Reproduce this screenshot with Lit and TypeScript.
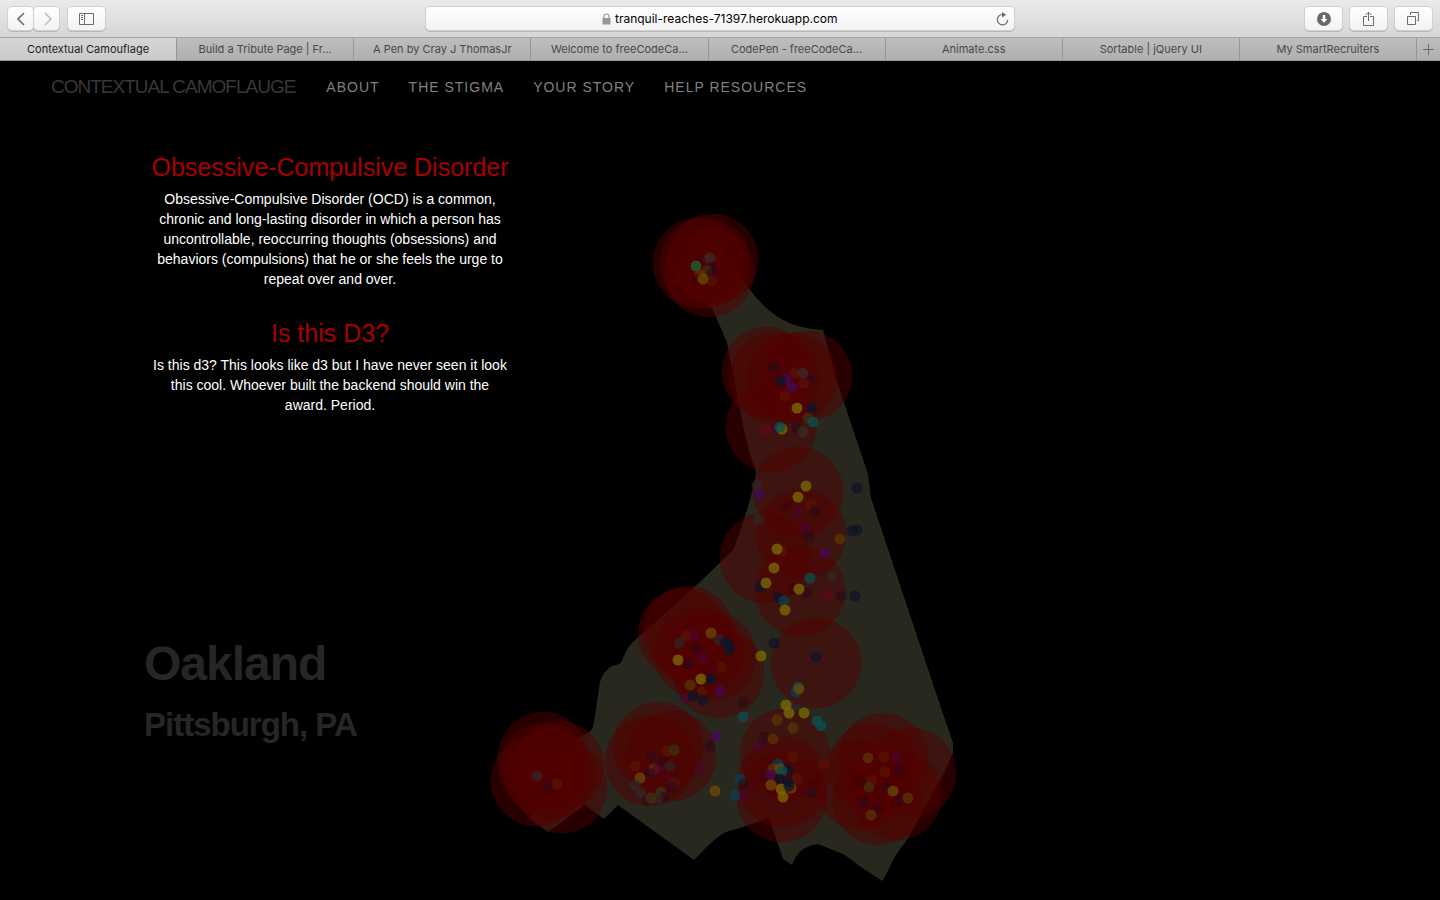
import { LitElement, html, svg, css } from "lit";
import { customElement } from "lit/decorators.js";

const TABS = [
  "Contextual Camouflage",
  "Build a Tribute Page | Fr...",
  "A Pen by Cray J ThomasJr",
  "Welcome to freeCodeCa...",
  "CodePen - freeCodeCa...",
  "Animate.css",
  "Sortable | jQuery UI",
  "My SmartRecruiters",
];

const LINKS = ["About", "The Stigma", "Your Story", "Help Resources"];

const LAND =
  "M707 228 L750 290 Q764 309 783 320 Q797 328 823 330 L837 382 L868 474 L871 498 L900 585 L935 690 " +
  "L953 743 L953 753 L943 775 L907 840 Q896 854 893 860 Q887 874 882 881 L858 865 Q850 858 843 854 L818 844 " +
  "Q810 845 803 849 Q795 856 792 865 L783 859 L769 818 L743 827 L726 832 Q718 835 700 854 L694 860 L618 805 " +
  "L604 819 L585 805 L548 832 L530 818 L560 750 L583 735 Q593 733 594 722 L600 682 Q602 675 606 671 Q611 665 616 665 " +
  "Q622 664 623 658 Q627 648 632 643 L700 582 L734 549 L748 507 L755 480 L756 471 L750 455 L744 430 L740 410 " +
  "L727 343 L723 333 L712 308 L700 299 L670 283 Z";

// Reports by neighbourhood: centre x, centre y
const AREAS: [number, number][] = [
  [698, 263], [713, 259], [709, 272], [705, 263],
  [767, 372], [775, 378], [807, 376], [792, 378], [771, 427],
  [798, 492], [801, 534], [765, 558], [800, 591], [816, 663],
  [683, 634], [688, 631], [699, 653], [711, 656], [719, 673],
  [658, 747], [671, 756], [650, 761],
  [543, 757], [536, 781], [559, 766], [562, 788], [544, 768], [550, 775],
  [785, 754], [782, 797], [783, 782],
  [883, 758], [911, 773], [878, 800], [861, 785], [873, 768], [897, 795],
];

const DOTS: [string, number, number][] = [
  ["rust", 707, 260], ["dark", 701, 261], ["slate", 710, 258], ["green", 696, 266], ["plum", 711, 267], ["olive", 707, 271],
  ["plum", 712, 273], ["amber", 700, 275], ["rust", 712, 281], ["dark", 698, 280], ["mustard", 703, 279],
  ["plum", 774, 367], ["rust", 795, 373], ["slate", 803, 373], ["plum", 812, 380], ["rust", 804, 383], ["purple", 786, 379],
  ["navy", 781, 381], ["purple", 792, 387], ["rust", 785, 396], ["yellow", 797, 408], ["navy", 812, 408], ["olive", 808, 418],
  ["teal", 813, 422], ["plum", 797, 428], ["slate", 803, 432], ["crimson", 766, 430], ["magenta", 776, 429], ["yellow", 782, 429],
  ["teal", 780, 427],
  ["grey", 757, 485], ["purple", 759, 494], ["yellow", 806, 486], ["yellow", 798, 497], ["rust", 811, 505], ["dark", 786, 506],
  ["plum", 815, 511], ["magenta", 798, 512], ["navy", 857, 488], ["navy", 852, 531], ["navy", 857, 530], ["amber", 840, 539],
  ["grey", 759, 519], ["wine", 780, 527], ["magenta", 805, 527], ["plum", 809, 536], ["purple", 825, 553], ["rust", 782, 551],
  ["yellow", 777, 549], ["yellow", 774, 568], ["magenta", 762, 582], ["navy", 760, 587], ["yellow", 766, 583], ["teal", 810, 578],
  ["grey", 832, 577], ["dark", 793, 589], ["plum", 807, 593], ["yellow", 799, 589], ["crimson", 828, 595], ["plum", 841, 596],
  ["navy", 855, 596], ["navy", 778, 597], ["blue", 784, 601], ["yellow", 785, 610],
  ["grey", 679, 643], ["magenta", 694, 635], ["rust", 686, 636], ["mustard", 711, 633], ["grey", 719, 640], ["navy", 725, 642],
  ["navy", 729, 645], ["navy", 729, 650], ["plum", 696, 648], ["magenta", 702, 658], ["yellow", 678, 660], ["plum", 688, 663],
  ["rust", 721, 667], ["wine", 714, 667], ["yellow", 701, 679], ["navy", 711, 679], ["amber", 690, 685], ["rust", 702, 692],
  ["purple", 720, 691], ["magenta", 686, 698], ["navy", 693, 696], ["navy", 703, 700], ["yellow", 761, 656], ["navy", 774, 643],
  ["navy", 816, 657], ["plum", 743, 702], ["crimson", 745, 719], ["teal", 743, 717], ["purple", 716, 736], ["plum", 710, 746],
  ["blue", 796, 692], ["teal", 798, 687], ["mustard", 799, 689], ["yellow", 786, 705], ["yellow", 789, 713], ["yellow", 804, 713],
  ["teal", 821, 726], ["teal", 817, 721], ["amber", 777, 720], ["amber", 793, 728], ["plum", 764, 737], ["amber", 773, 739],
  ["magenta", 759, 746],
  ["grey", 537, 776], ["plum", 547, 786], ["rust", 557, 784],
  ["rust", 667, 751], ["olive", 674, 750], ["plum", 651, 756], ["plum", 663, 761], ["rust", 635, 766], ["amber", 654, 769],
  ["grey", 670, 766], ["magenta", 658, 769], ["plum", 649, 773], ["mustard", 640, 778], ["magenta", 671, 781], ["rust", 674, 784],
  ["grey", 635, 785], ["plum", 673, 787], ["grey", 641, 793], ["olive", 661, 792], ["plum", 664, 797], ["grey", 658, 798],
  ["plum", 647, 800], ["olive", 651, 798], ["magenta", 700, 768], ["bright-amber", 715, 791], ["blue", 740, 779], ["blue", 735, 795],
  ["magenta", 745, 795], ["plum", 744, 784], ["rust", 824, 764], ["dark", 763, 776],
  ["rust", 793, 757], ["blue", 778, 764], ["amber", 773, 769], ["mustard", 780, 769], ["purple", 771, 775], ["navy", 788, 770],
  ["teal", 782, 771], ["navy", 780, 779], ["rust", 797, 779], ["bright-amber", 771, 785], ["bright-amber", 791, 788], ["navy", 788, 782],
  ["yellow", 781, 789], ["navy", 789, 786], ["yellow", 783, 797], ["plum", 811, 793], ["dark", 814, 783],
  ["amber", 868, 758], ["rust", 884, 757], ["magenta", 897, 758], ["plum", 899, 770], ["rust", 885, 772], ["rust", 872, 780],
  ["olive", 869, 787], ["plum", 887, 787], ["dark", 860, 782], ["mustard", 893, 791], ["plum", 899, 800], ["amber", 908, 798],
  ["plum", 864, 802], ["plum", 877, 809], ["amber", 871, 815], ["wine", 908, 810],
];

@customElement("app-root")
export class AppRoot extends LitElement {
  static styles = css`
    :host {
      display: flex;
      flex-direction: column;
      min-height: 100vh;
      background: #000;
      font-family: "Liberation Sans", Arial, sans-serif;
      font-size: 14px;
      line-height: 20px;
      color: #fff;
    }
    * { box-sizing: border-box; }
    button, input { font: inherit; color: inherit; border: 0; margin: 0; padding: 0; background: none; }
    .toolbar {
      display: grid;
      grid-template-columns: 1fr minmax(200px, 590px) 1fr;
      align-items: center;
      height: 38px;
      padding: 0 8px;
      background: linear-gradient(#eaeaea, #d6d6d6);
      border-bottom: 1px solid #a4a4a4;
      font-family: Inter, "Liberation Sans", sans-serif;
    }
    .group { display: flex; align-items: center; }
    .left { gap: 9px; }
    .right { gap: 8px; justify-content: flex-end; }
    .pair { display: flex; gap: 1px; }
    .tool, .address {
      height: 23px;
      border-radius: 4px;
      background: linear-gradient(#fefefe, #f3f3f3);
      box-shadow: 0 0 0 1px #d0d0d0, 0 1px 0 1px #b8b8b8;
    }
    .tool { display: grid; place-items: center; width: 37px; }
    .pair .tool { width: 25px; }
    .address { display: flex; align-items: center; margin: 0 1px; padding: 0 5px; color: #000; }
    .location { flex: 1; display: flex; align-items: center; justify-content: center; gap: 4px; padding-left: 16px; }
    .url { width: 226px; font-size: 12px; line-height: 20px; }
    .reload { display: grid; place-items: center; }
    .icon { display: block; fill: none; stroke: #6b6b6b; }
    .chevron { stroke-width: 1.6; }
    .faded { stroke: #bdbdbd; }
    .tabs {
      display: flex;
      height: 23px;
      background: linear-gradient(#bdbdbd, #b0b0b0);
      border-bottom: 1px solid #979797;
      font-family: Inter, "Liberation Sans", sans-serif;
      font-size: 11px;
      line-height: 20px;
      color: #484848;
    }
    .tab { flex: 1; min-width: 0; border-right: 1px solid #969696; white-space: nowrap; overflow: hidden; }
    .tab.active { background: linear-gradient(#d6d6d6, #cbcbcb); color: #1c1c1c; }
    .add { display: grid; place-items: center; width: 23px; }
    .navbar { display: flex; align-items: center; gap: 31px; height: 52px; padding: 0 51px; }
    .navbar a { text-decoration: none; }
    .brand { font-size: 19px; letter-spacing: -1px; color: #383838; }
    .menu { display: flex; gap: 29px; margin: 0; padding: 0; list-style: none; text-transform: uppercase; letter-spacing: 1px; }
    .menu a { color: #808080; }
    .stage { display: grid; flex: 1; }
    .copy, .map { grid-area: 1 / 1; }
    .copy { width: 372px; margin: 40px 0 0 10%; }
    .entry { margin-bottom: 30px; padding: 0 6px; text-align: center; }
    h2 { margin: 0 0 8px; font-size: 25px; font-weight: 400; line-height: 28px; color: #a80000; white-space: nowrap; }
    p { margin: 0; }
    .place { margin: 222px 0 0; color: #262626; }
    .city { margin: 0; font-size: 48px; line-height: 54px; letter-spacing: -1px; }
    .region { margin: 15px 0 0; font-size: 33px; line-height: 38px; letter-spacing: -1px; }
    .map { width: 470px; height: 675px; margin: 97px 0 0 calc(50% - 230px); }
    .land { fill: #28281f; }
    .area { fill: #520000; opacity: 0.5; }
    .dot { opacity: 0.75; }
    .yellow { fill: #7c6c04; }
    .mustard { fill: #6a4a06; }
    .bright-amber { fill: #704a06; }
    .amber { fill: #5e3206; }
    .rust { fill: #5c1604; opacity: 0.6; }
    .olive { fill: #3e3210; }
    .green { fill: #186a30; }
    .teal { fill: #0a5050; }
    .blue { fill: #0c3c50; }
    .navy { fill: #0e1428; }
    .purple { fill: #440856; }
    .magenta { fill: #4c0430; opacity: 0.6; }
    .crimson { fill: #640818; opacity: 0.6; }
    .wine { fill: #4c0410; opacity: 0.5; }
    .plum { fill: #2c0818; opacity: 0.6; }
    .dark { fill: #3c0408; opacity: 0.6; }
    .slate { fill: #3c2a2a; }
    .grey { fill: #30282a; opacity: 0.65; }
  `;

  render() {
    return html`
      <header>
        <div class="toolbar">
          <div class="group left">
            <div class="pair">
              <button class="tool" aria-label="Back">
                <svg class="icon chevron" width="24" height="22" viewBox="0 0 24 22"><path d="M15 5 9 11l6 6"/></svg>
              </button>
              <button class="tool" aria-label="Forward">
                <svg class="icon chevron faded" width="24" height="22" viewBox="0 0 24 22"><path d="M10 5 16 11 10 17"/></svg>
              </button>
            </div>
            <button class="tool" aria-label="Sidebar">
              <svg class="icon" width="16" height="12" viewBox="0 0 16 12"><path d="M.5.5h14v11H.5zM5.500.5v11M2 2.500h2M2 4.500h2M2 6.500h2"/></svg>
            </button>
          </div>
          <div class="address">
            <div class="location">
              <svg width="9" height="12" viewBox="0 0 9 12"><path d="M.5 5h8v6.500h-8z" fill="#979797"/><path d="M2 5.500V3.500a2.500 2.500 0 0 1 5 0v2" fill="none" stroke="#979797" stroke-width="1.200"/></svg>
              <input class="url" type="text" aria-label="Address" .value=${"tranquil-reaches-71397.herokuapp.com"} />
            </div>
            <button class="reload" aria-label="Reload">
              <svg class="icon" width="13" height="14" viewBox="0 0 13 14"><path d="M6.500 2.500a5.200 5.200 0 1 0 5.200 5.200" stroke-width="1.200"/><path d="M6 0 10 2.700 6 5.400z" fill="#6b6b6b" stroke="none"/></svg>
            </button>
          </div>
          <div class="group right">
            <button class="tool" aria-label="Downloads">
              <svg width="14" height="14" viewBox="0 0 14 14"><circle cx="7" cy="7" r="7" fill="#696969"/><path d="M5.800 3h2.400v4h2.200L7 10.800 3.600 7h2.200z" fill="#fff"/></svg>
            </button>
            <button class="tool" aria-label="Share">
              <svg class="icon" width="12" height="16" viewBox="0 0 12 16"><path d="M4 5.500H.5v9h10v-9H7M5.500 10V1.500M2.700 4 5.500 1.200 8.300 4"/></svg>
            </button>
            <button class="tool" aria-label="Show all tabs">
              <svg class="icon" width="13" height="13" viewBox="0 0 13 13"><path d="M.5 4.500h8v8h-8zM3.500 3V.5h8v8H10"/></svg>
            </button>
          </div>
        </div>
        <div class="tabs">
          ${TABS.map((t, i) => html`<button class="tab ${i === 0 ? "active" : ""}">${t}</button>`)}
          <button class="add" aria-label="New tab">
            <svg class="icon" width="11" height="11" viewBox="0 0 11 11"><path d="M5.500 0v11M0 5.500h11"/></svg>
          </button>
        </div>
      </header>
      <nav class="navbar">
        <a class="brand" href="#">CONTEXTUAL CAMOFLAUGE</a>
        <ul class="menu">
          ${LINKS.map((l) => html`<li><a href="#">${l}</a></li>`)}
        </ul>
      </nav>
      <main class="stage">
        <svg class="map" viewBox="490 210 470 675" role="img" aria-label="Map of Oakland">
          <path class="land" d=${LAND} />
          ${AREAS.map(([x, y]) => svg`<circle class="area" cx=${x} cy=${y} r="45.300"/>`)}
          ${DOTS.map(([c, x, y]) => svg`<circle class="dot ${c}" cx=${x} cy=${y} r="5.500"/>`)}
        </svg>
        <div class="copy">
          <section class="entry">
            <h2>Obsessive-Compulsive Disorder</h2>
            <p>
              Obsessive-Compulsive Disorder (OCD) is a common, chronic and long-lasting disorder in which a person has
              uncontrollable, reoccurring thoughts (obsessions) and behaviors (compulsions) that he or she feels the
              urge to repeat over and over.
            </p>
          </section>
          <section class="entry">
            <h2>Is this D3?</h2>
            <p>
              Is this d3? This looks like d3 but I have never seen it look this cool. Whoever built the backend should
              win the award. Period.
            </p>
          </section>
          <div class="place">
            <h1 class="city">Oakland</h1>
            <h3 class="region">Pittsburgh, PA</h3>
          </div>
        </div>
      </main>
    `;
  }
}
